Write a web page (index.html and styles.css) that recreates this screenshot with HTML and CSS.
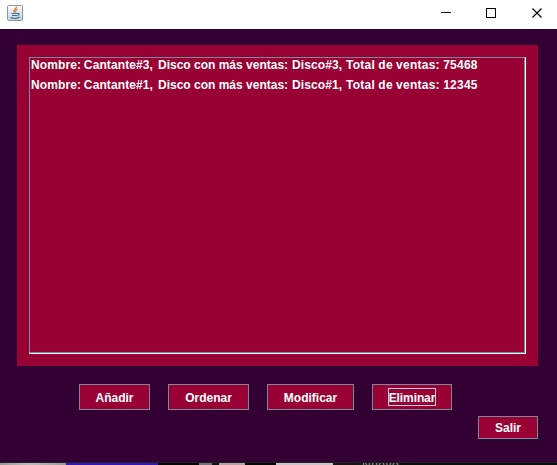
FILE: index.html
```html
<!DOCTYPE html>
<html lang="es">
<head>
<meta charset="utf-8">
<title>Cantantes</title>
<link rel="stylesheet" href="styles.css">
</head>
<body>
<div class="window">
  <header class="titlebar">
    <svg class="java" width="16" height="16" viewBox="0 0 16 16">
      <defs><linearGradient id="face" x2="0" y2="1"><stop stop-color="#fff"/><stop offset="1" stop-color="#c3d3de"/></linearGradient></defs>
      <rect x=".5" y=".5" width="15" height="15" rx="1" fill="url(#face)" stroke="#8198a8"/>
      <path d="M9.500 1.500C10 4 5.500 4.500 7.200 7.500M10.500 4C8 5 8.500 6 8.500 7.500" fill="none" stroke="#e57b24" stroke-width="1.300"/>
      <path d="M4.500 8.500H10.500M10.500 8.500C13 8 12.500 10 10.500 10.500M5 10.500H10M3.500 12.500C6 14 11 13.500 12.500 12" fill="none" stroke="#416d91" stroke-width="1.100"/>
    </svg>
    <svg class="controls" width="102" height="12" viewBox="0 0 102 12" fill="none" stroke="#000">
      <path d="M0 5.500H10" shape-rendering="crispEdges"/>
      <rect x="45.500" y="1.500" width="9" height="9" shape-rendering="crispEdges"/>
      <path d="M91.500 1.500L100.500 10.500M100.500 1.500L91.500 10.500" stroke-width="1.100"/>
    </svg>
  </header>
  <main class="content">
    <section class="panel">
      <div class="list"><ul class="rows">
        <li><span class="a">Nombre: Cantante#3, </span><span class="b">Disco con más ventas: </span><span class="c">Disco#3, </span><span class="d">Total de ventas: 75468</span></li>
        <li><span class="a">Nombre: Cantante#1, </span><span class="b">Disco con más ventas: </span><span class="c">Disco#1, </span><span class="d">Total de ventas: 12345</span></li>
      </ul></div>
    </section>
    <div class="actions">
      <button class="add">Añadir</button>
      <button class="sort">Ordenar</button>
      <button class="edit">Modificar</button>
      <button class="remove"><span class="focus">Eliminar</span></button>
    </div>
    <div class="exit"><button class="quit">Salir</button></div>
  </main>
  <footer class="behind"><span class="new">Nuevo</span></footer>
</div>
</body>
</html>
```

FILE: styles.css
```css
* { box-sizing: border-box; }
body { margin: 0; font: bold 12px "Liberation Sans", Arial, sans-serif; color: #fff; }
.window { width: 557px; height: 465px; display: flex; flex-direction: column; overflow: hidden; }
.titlebar { height: 29px; flex: none; background: #fff; display: flex; justify-content: space-between; padding: 5px 14px 0 7px; }
.controls { margin-top: 2px; }
.content { height: 433px; flex: none; background: #330033; padding: 16px 19px 0 17px; }
.panel { height: 321px; background: #990033; padding: 12px; }
.list { height: 297px; border: solid #fff; border-width: 0 1px 1px 0; }
.rows { height: 296px; margin: 0; padding: 0 0 0 1px; list-style: none; border: 1px solid #7a8a99; }
.rows li { height: 20px; line-height: 14px; display: flex; white-space: pre; }
.a { width: 127px; letter-spacing: .1px; word-spacing: -.6px; }
.b { width: 134px; letter-spacing: 0; }
.c { width: 54px; letter-spacing: .1px; }
.d { letter-spacing: .25px; word-spacing: -.3px; }
.actions { display: flex; gap: 18px; padding: 18px 0 0 62px; }
button { height: 26px; padding: 1px 0 0; font: inherit; color: inherit; background: #990033; border: 1px solid #7a8a99; display: flex; align-items: center; justify-content: center; }
.add { width: 71px; }
.sort { width: 81px; }
.edit { width: 87px; }
.remove { width: 80px; padding: 0; }
.focus { width: 48px; height: 18px; line-height: 18px; border: 1px solid #b8cfe5; display: flex; justify-content: center; letter-spacing: -.1px; }
.exit { display: flex; justify-content: flex-end; padding-top: 6px; }
.quit { width: 60px; height: 23px; }
.behind { height: 3px; flex: none; overflow: hidden; border-top: 1px solid #222; background: linear-gradient(90deg, #999, #bbb 30px, #999 66px, #3316bd 66px 158px, #050505 158px 199px, #77717b 199px 212px, #111 212px 219px, #b8a0a6 219px 245px, #050505 245px 276px, #c8c4c8 276px 333px, #1b1114 333px 357px, #161616 357px 400px, #0b0b0b 400px); }
.new { display: block; margin: -4px 0 0 362px; line-height: 12px; font-weight: normal; color: #999; letter-spacing: .5px; }
```
